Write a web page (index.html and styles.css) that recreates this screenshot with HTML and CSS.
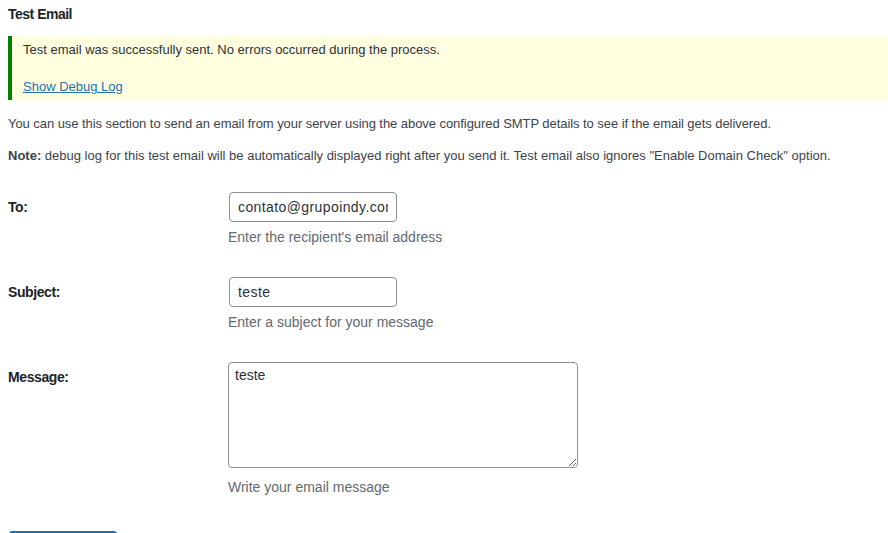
FILE: index.html
```html
<!DOCTYPE html>
<html lang="en">
<head>
<meta charset="utf-8">
<title>Test Email</title>
<link rel="stylesheet" href="styles.css">
</head>
<body>
<div class="wrap">
  <h3 class="section-title">Test Email</h3>
  <div class="notice notice-success">
    <p class="notice-msg">Test email was successfully sent. No errors occurred during the process.</p>
    <p class="notice-link"><a href="#debug">Show Debug Log</a></p>
  </div>
  <p class="intro">You can use this section to send an email from your server using the above configured SMTP details to see if the email gets delivered.</p>
  <p class="intro intro-note"><strong>Note:</strong> debug log for this test email will be automatically displayed right after you send it. Test email also ignores "Enable Domain Check" option.</p>
  <form class="test-form">
    <table class="form-table">
      <tr>
        <th><label for="to">To:</label></th>
        <td>
          <input id="to" class="text-input" type="text" value="contato@grupoindy.com">
          <p class="description">Enter the recipient's email address</p>
        </td>
      </tr>
      <tr>
        <th><label for="subject">Subject:</label></th>
        <td>
          <input id="subject" class="text-input" type="text" value="teste">
          <p class="description">Enter a subject for your message</p>
        </td>
      </tr>
      <tr>
        <th><label for="message">Message:</label></th>
        <td>
          <textarea id="message" class="message-input">teste</textarea>
          <p class="description description-area">Write your email message</p>
        </td>
      </tr>
    </table>
    <p class="submit"><button type="button" class="button-primary">Send Test Email</button></p>
  </form>
</div>
</body>
</html>
```
FILE: styles.css
```css
html, body {
  margin: 0;
  padding: 0;
  background: #ffffff;
}
body {
  font-family: "Liberation Sans", Arial, sans-serif;
  font-size: 13px;
  color: #3c434a;
  overflow: hidden;
}
.wrap {
  padding-left: 8px;
}
.section-title {
  margin: 0;
  padding-top: 4px;
  font-size: 14px;
  line-height: 20px;
  font-weight: 700;
  color: #1d2327;
  letter-spacing: -0.5px;
}
.notice {
  margin-top: 12px;
  background: #ffffe0;
  border-left: 4px solid #008000;
  padding: 4px 12px 3px 11px;
}
.notice p {
  margin: 0;
  line-height: 20px;
  font-size: 13px;
  color: #2c3338;
}
.notice-link {
  padding-top: 17px;
}
.notice-link a {
  color: #2271b1;
  text-decoration: underline;
}
.intro {
  margin: 14px 0 0;
  line-height: 20px;
  font-size: 13px;
  letter-spacing: -0.06px;
}
.intro-note {
  margin-top: 12px;
  letter-spacing: 0;
}
.intro strong {
  font-weight: 700;
  color: #3c434a;
}
.test-form {
  margin: 0;
}
.form-table {
  margin-top: 11px;
  border-collapse: collapse;
  border-spacing: 0;
  width: 100%;
}
.form-table th {
  width: 200px;
  padding: 21px 10px 20px 0;
  text-align: left;
  vertical-align: top;
  font-size: 14px;
  line-height: 18px;
  font-weight: 700;
  color: #1d2327;
  letter-spacing: -0.4px;
}
.form-table td {
  padding: 15px 10px;
  vertical-align: top;
}
.text-input {
  display: block;
  box-sizing: border-box;
  width: 168px;
  height: 30px;
  margin: 0 1px;
  padding: 0 8px;
  border: 1px solid #8c8f94;
  border-radius: 4px;
  background: #ffffff;
  font-family: inherit;
  font-size: 14px;
  line-height: 28px;
  color: #2c3338;
  letter-spacing: 0.4px;
  outline: none;
}
.message-input {
  display: block;
  box-sizing: border-box;
  width: 350px;
  height: 106px;
  margin: 0;
  padding: 2px 6px;
  border: 1px solid #8c8f94;
  border-radius: 4px;
  background: #ffffff;
  font-family: inherit;
  font-size: 14px;
  line-height: 20px;
  color: #2c3338;
  outline: none;
}
.description {
  margin: 5px 0 0;
  font-size: 14px;
  line-height: 20px;
  color: #646970;
}
.description-area {
  margin-top: 9px;
}
.submit {
  margin: 19px 0 0;
  padding: 0;
}
.button-primary {
  display: block;
  margin-left: 1px;
  width: 108px;
  height: 30px;
  padding: 0 10px;
  border: 1px solid #2271b1;
  border-radius: 3px;
  background: #2271b1;
  color: #ffffff;
  font-family: inherit;
  font-size: 13px;
  line-height: 28px;
}
```
